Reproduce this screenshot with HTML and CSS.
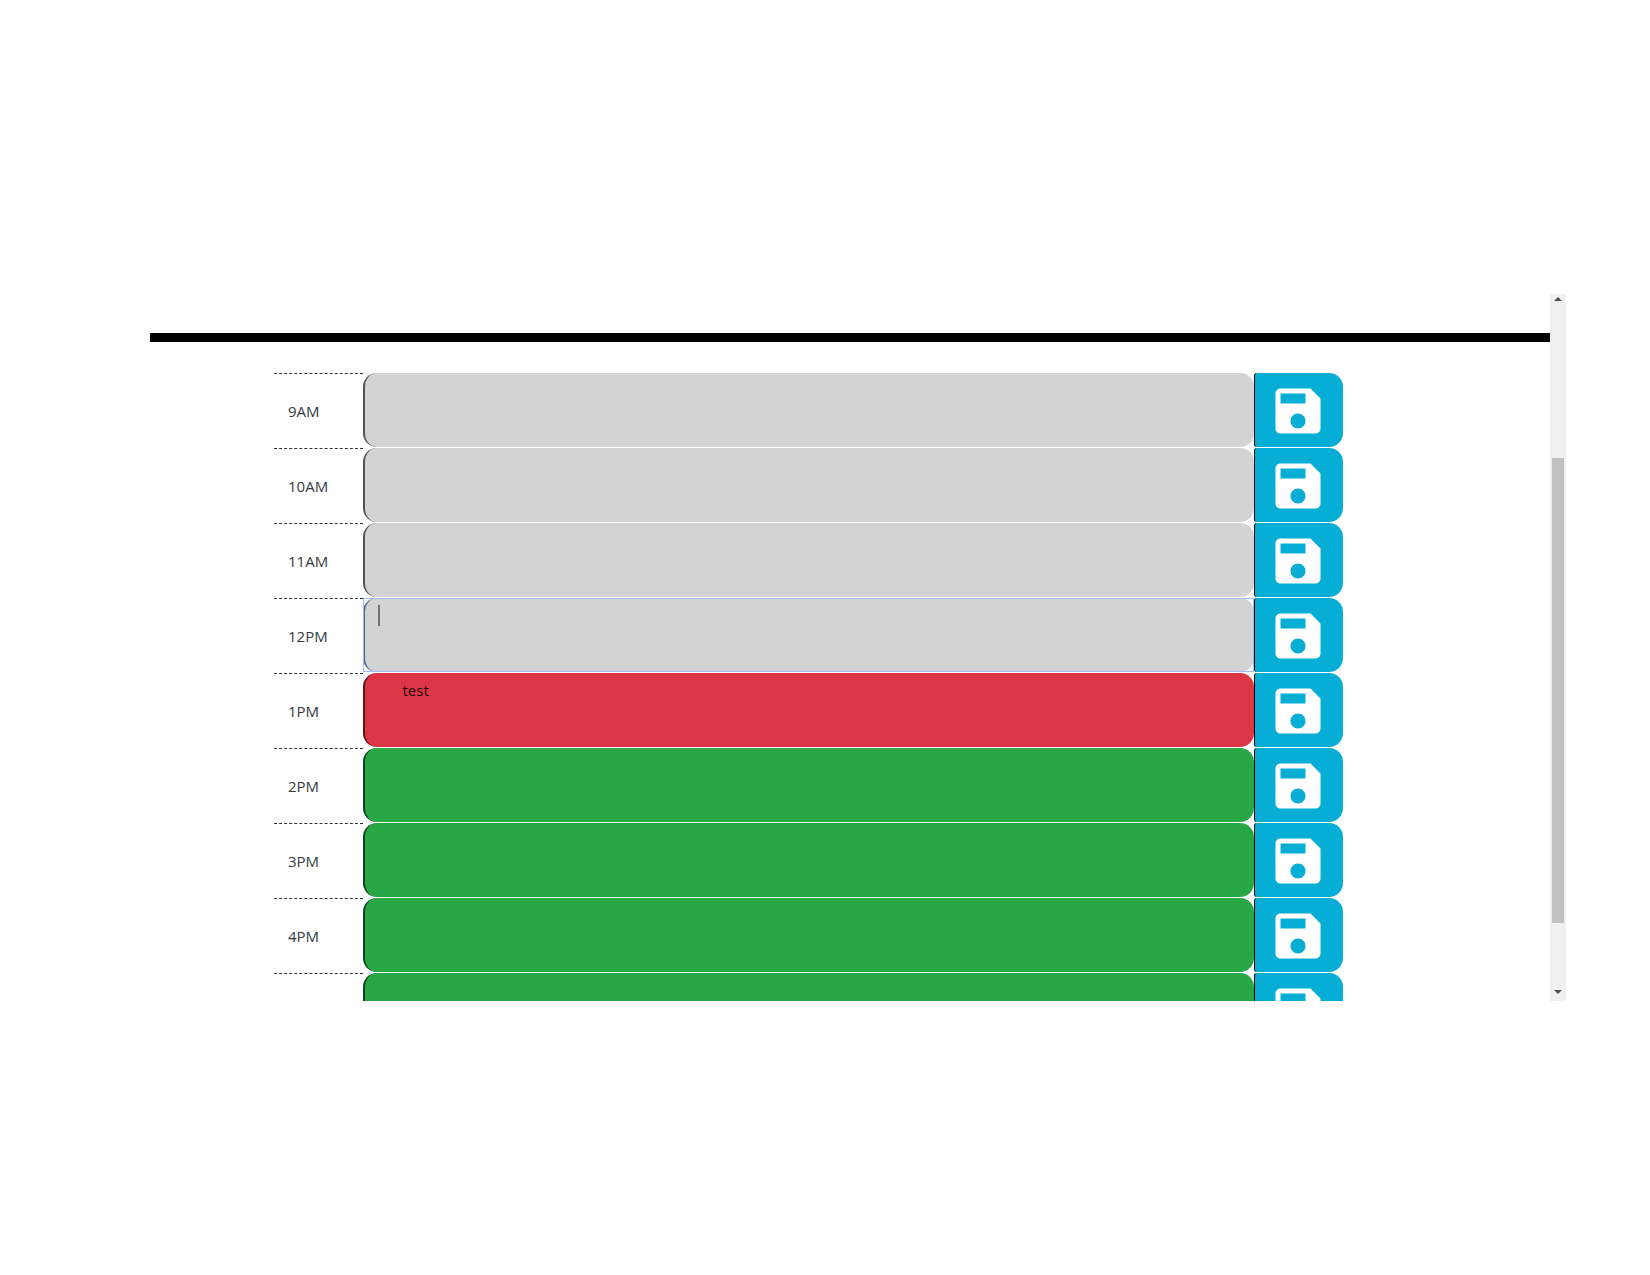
FILE: index.html
```
<!DOCTYPE html>
<html lang="en">
<head>
<meta charset="utf-8">
<title>Work Day Scheduler</title>
<link rel="stylesheet" href="styles.css">
</head>
<body>
<svg class="sprite" aria-hidden="true">
  <symbol id="save" viewBox="0 0 24 24"><path d="M17 3H5c-1.11 0-2 .9-2 2v14c0 1.1.89 2 2 2h14c1.1 0 2-.9 2-2V7l-4-4zm-5 16c-1.66 0-3-1.34-3-3s1.34-3 3-3 3 1.34 3 3-1.34 3-3 3zm3-10H5V5h10v4z"/></symbol>
</svg>
<div class="window">
  <main class="page">
    <header class="divider"></header>
    <div class="schedule">
      <div class="row past"><label class="hour" for="h9">9AM</label><div class="entry"><textarea id="h9"></textarea></div><button class="save" type="button" aria-label="Save 9AM"><svg><use href="#save"/></svg></button></div>
      <div class="row past"><label class="hour" for="h10">10AM</label><div class="entry"><textarea id="h10"></textarea></div><button class="save" type="button" aria-label="Save 10AM"><svg><use href="#save"/></svg></button></div>
      <div class="row past"><label class="hour" for="h11">11AM</label><div class="entry"><textarea id="h11"></textarea></div><button class="save" type="button" aria-label="Save 11AM"><svg><use href="#save"/></svg></button></div>
      <div class="row past"><label class="hour" for="h12">12PM</label><div class="entry active"><textarea id="h12"></textarea><span class="caret"></span></div><button class="save" type="button" aria-label="Save 12PM"><svg><use href="#save"/></svg></button></div>
      <div class="row present"><label class="hour" for="h13">1PM</label><div class="entry"><textarea id="h13">      test</textarea></div><button class="save" type="button" aria-label="Save 1PM"><svg><use href="#save"/></svg></button></div>
      <div class="row future"><label class="hour" for="h14">2PM</label><div class="entry"><textarea id="h14"></textarea></div><button class="save" type="button" aria-label="Save 2PM"><svg><use href="#save"/></svg></button></div>
      <div class="row future"><label class="hour" for="h15">3PM</label><div class="entry"><textarea id="h15"></textarea></div><button class="save" type="button" aria-label="Save 3PM"><svg><use href="#save"/></svg></button></div>
      <div class="row future"><label class="hour" for="h16">4PM</label><div class="entry"><textarea id="h16"></textarea></div><button class="save" type="button" aria-label="Save 4PM"><svg><use href="#save"/></svg></button></div>
      <div class="row future"><label class="hour" for="h17"></label><div class="entry"><textarea id="h17" aria-label="5PM"></textarea></div><button class="save" type="button" aria-label="Save 5PM"><svg><use href="#save"/></svg></button></div>
    </div>
  </main>
  <div class="scrollbar" aria-hidden="true">
    <svg class="arrow" viewBox="0 0 8 4"><path d="M4 0l4 4H0z"/></svg>
    <div class="track"><div class="thumb"></div></div>
    <svg class="arrow" viewBox="0 0 8 4"><path d="M0 0h8L4 4z"/></svg>
  </div>
</div>
</body>
</html>
```
FILE: styles.css
```
* {
  box-sizing: border-box;
}

body {
  margin: 0;
  padding: 294px 84px 274px 150px;
  background: #fff;
  color: #343a40;
  font: 15px/22px "Open Sans", sans-serif;
}

.sprite {
  display: none;
}

.window {
  display: flex;
  height: calc(100vh - 568px);
  overflow: hidden;
}

.page {
  flex: 1;
  padding-top: 39px;
}

.divider {
  height: 9px;
  margin-bottom: 31px;
  background: #000;
}

.schedule {
  margin: 0 207px 0 124px;
}

.row {
  display: grid;
  grid-template-columns: 1fr 10fr 1fr;
  height: 75px;
}

.hour {
  display: flex;
  align-items: center;
  padding-left: 14px;
  border-top: 1px dashed #333;
}

.entry {
  position: relative;
  height: 74px;
}

textarea {
  display: block;
  width: 100%;
  height: 100%;
  padding: 6px 14px;
  border: 0;
  border-left: 2px solid rgba(0, 0, 0, 0.6);
  border-radius: 14px;
  outline: 0;
  resize: none;
  overflow: hidden;
  color: #2a0a0d;
  font: inherit;
}

.past textarea {
  background: #d3d3d3;
}

.present textarea {
  background: #dc3545;
}

.future textarea {
  background: #28a745;
}

.active {
  outline: 1px solid #9dbdf5;
  outline-offset: -1px;
}

.active textarea {
  border-left-color: #456590;
}

.caret {
  position: absolute;
  top: 7px;
  left: 15px;
  width: 2px;
  height: 21px;
  background: #707070;
}

.save {
  display: flex;
  align-items: center;
  justify-content: center;
  height: 74px;
  padding: 2px 2px 0 0;
  border: 0;
  border-left: 1px solid #000;
  border-radius: 3px 14px 14px 3px;
  background: #06aed5;
}

.save svg {
  width: 60px;
  height: 60px;
  fill: #fff;
}

.scrollbar {
  display: flex;
  flex-direction: column;
  align-items: center;
  width: 16px;
  padding: 3px 0 7px;
  background: #f0f0f0;
}

.arrow {
  width: 8px;
  height: 4px;
  fill: #505050;
}

.track {
  flex: 1;
  width: 12px;
  padding: 157px 0 67px;
}

.thumb {
  height: 100%;
  background: #c1c1c1;
}
```
